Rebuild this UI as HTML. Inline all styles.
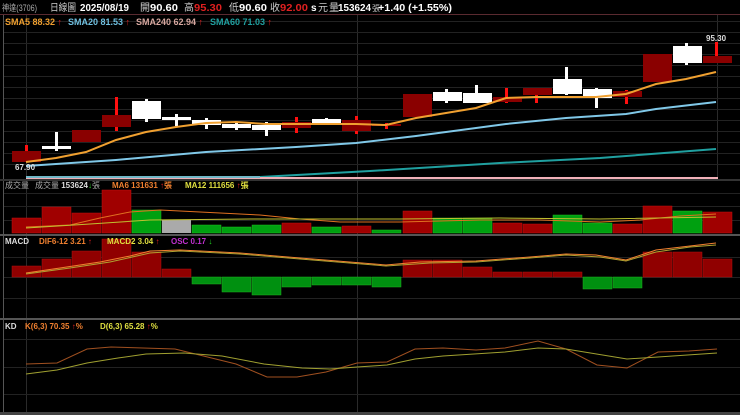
<!DOCTYPE html>
<html><head><meta charset="utf-8"><style>
html,body{margin:0;padding:0;background:#000;width:740px;height:415px;overflow:hidden}
svg{display:block}
text{font-family:"Liberation Sans","Noto Sans CJK TC",sans-serif}
</style></head><body>
<svg width="740" height="415" viewBox="0 0 740 415" xmlns="http://www.w3.org/2000/svg">
<rect width="740" height="415" fill="#000"/>
<!-- header -->
<g font-size="10">
<text x="2" y="11" font-size="9" fill="#aaa" textLength="35" lengthAdjust="spacingAndGlyphs">神達(3706)</text>
<text x="50" y="11" fill="#ccc" textLength="26" lengthAdjust="spacingAndGlyphs">日線圖</text>
<text x="80" y="11" font-weight="bold" fill="#fff" textLength="49" lengthAdjust="spacingAndGlyphs">2025/08/19</text>
<text x="140" y="11" fill="#ccc">開</text>
<text x="150" y="11" font-weight="bold" fill="#fff" textLength="28" lengthAdjust="spacingAndGlyphs">90.60</text>
<text x="184" y="11" fill="#ccc">高</text>
<text x="194" y="11" font-weight="bold" fill="#e02020" textLength="28" lengthAdjust="spacingAndGlyphs">95.30</text>
<text x="229" y="11" fill="#ccc">低</text>
<text x="239" y="11" font-weight="bold" fill="#fff" textLength="28" lengthAdjust="spacingAndGlyphs">90.60</text>
<text x="270" y="11" fill="#ccc">收</text>
<text x="280" y="11" font-weight="bold" fill="#e02020" textLength="28" lengthAdjust="spacingAndGlyphs">92.00</text>
<text x="311" y="11" font-weight="bold" fill="#fff">s</text>
<text x="318" y="11" fill="#ccc">元</text>
<text x="329" y="11" fill="#ccc">量</text>
<text x="338" y="11" font-weight="bold" fill="#fff" textLength="33" lengthAdjust="spacingAndGlyphs">153624</text>
<text x="372" y="11" fill="#ccc" font-size="8">張</text>
<text x="378" y="11" font-weight="bold" fill="#fff" textLength="74" lengthAdjust="spacingAndGlyphs">+1.40 (+1.55%)</text>
</g>
<line x1="0" y1="14.5" x2="740" y2="14.5" stroke="#5a2a30" stroke-width="1"/>
<!-- panel borders -->
<line x1="3.5" y1="15" x2="3.5" y2="415" stroke="#555"/>
<line x1="26.5" y1="15" x2="26.5" y2="415" stroke="#2a2a2a"/>
<line x1="357.5" y1="15" x2="357.5" y2="415" stroke="#2a2a2a"/>
<line x1="717.5" y1="15" x2="717.5" y2="178" stroke="#2a2a2a"/>
<!-- main grid -->
<g stroke="#222" stroke-width="1">
<line x1="4" y1="21.5" x2="740" y2="21.5"/><line x1="4" y1="32.5" x2="740" y2="32.5"/><line x1="4" y1="43.5" x2="740" y2="43.5"/><line x1="4" y1="54.5" x2="740" y2="54.5"/><line x1="4" y1="65.5" x2="740" y2="65.5"/><line x1="4" y1="76.5" x2="740" y2="76.5"/><line x1="4" y1="87.5" x2="740" y2="87.5"/><line x1="4" y1="98.5" x2="740" y2="98.5"/><line x1="4" y1="109.5" x2="740" y2="109.5"/><line x1="4" y1="120.5" x2="740" y2="120.5"/><line x1="4" y1="131.5" x2="740" y2="131.5"/><line x1="4" y1="142.5" x2="740" y2="142.5"/><line x1="4" y1="153.5" x2="740" y2="153.5"/><line x1="4" y1="164.5" x2="740" y2="164.5"/>
</g>
<!-- candle wicks -->
<g fill="#ff1010">
<rect x="25" y="145" width="3" height="6"/><rect x="115" y="97" width="3" height="34"/><rect x="295" y="117" width="3" height="16"/><rect x="355" y="116" width="3" height="18"/><rect x="385" y="123" width="3" height="6"/><rect x="505" y="88" width="3" height="15"/><rect x="535" y="95" width="3" height="8"/><rect x="625" y="90" width="3" height="14"/><rect x="715" y="42" width="3" height="21"/>
</g>
<g fill="#fff">
<rect x="55" y="132" width="3" height="19"/><rect x="145" y="99" width="3" height="23"/><rect x="175" y="114" width="3" height="12"/><rect x="205" y="118" width="3" height="11"/><rect x="235" y="122" width="3" height="8"/><rect x="265" y="122" width="3" height="14"/><rect x="325" y="118" width="3" height="7"/><rect x="445" y="89" width="3" height="14"/><rect x="475" y="85" width="3" height="18"/><rect x="565" y="67" width="3" height="28"/><rect x="595" y="88" width="3" height="20"/><rect x="685" y="43" width="3" height="22"/>
</g>
<g fill="#8a0000">
<rect x="12" y="151" width="29" height="11"/><rect x="72" y="130" width="29" height="12"/><rect x="102" y="115" width="29" height="12"/><rect x="282" y="122" width="29" height="6"/><rect x="342" y="120" width="29" height="11"/><rect x="372" y="124" width="29" height="2"/><rect x="403" y="94" width="29" height="23"/><rect x="493" y="97" width="29" height="5"/><rect x="523" y="88" width="29" height="7"/><rect x="613" y="91" width="29" height="6"/><rect x="643" y="54" width="29" height="28"/><rect x="703" y="56" width="29" height="7"/>
</g>
<g fill="#fff">
<rect x="42" y="146" width="29" height="3"/><rect x="132" y="101" width="29" height="18"/><rect x="162" y="117" width="29" height="3"/><rect x="192" y="120" width="29" height="5"/><rect x="222" y="124" width="29" height="4"/><rect x="252" y="125" width="29" height="5"/><rect x="312" y="119" width="29" height="5"/><rect x="433" y="92" width="29" height="9"/><rect x="463" y="93" width="29" height="10"/><rect x="553" y="79" width="29" height="15"/><rect x="583" y="89" width="29" height="9"/><rect x="673" y="46" width="29" height="17"/>
</g>
<!-- MAs -->
<polyline fill="none" stroke="#f0a030" stroke-width="2" points="26,162 56,158 86,152 116,140 146,132 176,127 206,123 236,122 266,124 296,124 326,124 356,124 386,125 416,118 446,113 476,108 506,98 536,97 566,97 596,97 626,94 656,84 686,79 716,72"/>
<polyline fill="none" stroke="#80c8e8" stroke-width="2" points="26,166 116,160 206,152 296,147 356,143 416,136 506,124 566,118 626,114 656,109 716,102"/>
<polyline fill="none" stroke="#20a0a0" stroke-width="2" points="260,177 370,171 500,163 600,158 716,149"/>
<line x1="26" y1="178" x2="718" y2="178" stroke="#f0b0b8" stroke-width="2"/>
<line x1="26" y1="177" x2="260" y2="177" stroke="#70b8c8" stroke-width="2"/>
<text x="15" y="170" font-size="8" font-weight="bold" fill="#ddd">67.90</text>
<text x="706" y="41" font-size="8" font-weight="bold" fill="#ddd">95.30</text>
<!-- separator -->
<rect x="0" y="179" width="740" height="2" fill="#333"/>
<!-- volume -->
<g stroke="#222"><line x1="4" y1="193.5" x2="740" y2="193.5"/><line x1="4" y1="206.5" x2="740" y2="206.5"/><line x1="4" y1="220.5" x2="740" y2="220.5"/></g>
<g fill="#a00000" stroke="#c01010" stroke-width="0.5">
<rect x="12" y="218" width="29" height="15"/><rect x="42" y="207" width="29" height="26"/><rect x="72" y="213" width="29" height="20"/><rect x="102" y="190" width="29" height="43"/><rect x="282" y="223" width="29" height="10"/><rect x="342" y="226" width="29" height="7"/><rect x="403" y="211" width="29" height="22"/><rect x="493" y="223" width="29" height="10"/><rect x="523" y="224" width="29" height="9"/><rect x="613" y="224" width="29" height="9"/><rect x="643" y="206" width="29" height="27"/><rect x="703" y="212" width="29" height="21"/>
</g>
<g fill="#00a010" stroke="#20c020" stroke-width="0.5">
<rect x="132" y="210" width="29" height="23"/><rect x="192" y="225" width="29" height="8"/><rect x="222" y="227" width="29" height="6"/><rect x="252" y="225" width="29" height="8"/><rect x="312" y="227" width="29" height="6"/><rect x="372" y="230" width="29" height="3"/><rect x="433" y="218" width="29" height="15"/><rect x="463" y="218" width="29" height="15"/><rect x="553" y="215" width="29" height="18"/><rect x="583" y="223" width="29" height="10"/><rect x="673" y="211" width="29" height="22"/>
</g>
<rect x="162" y="220" width="29" height="13" fill="#aaa"/>
<polyline fill="none" stroke="#e07020" stroke-width="1" points="26,227 70,225 100,218 130,212 160,210 200,212 260,215 300,219 340,222 400,222 480,220 540,220 600,222 640,220 680,216 716,214"/>
<polyline fill="none" stroke="#c0c030" stroke-width="1" points="26,228 90,224 150,220 250,219 400,219 500,218 600,219 716,217"/>
<rect x="0" y="234" width="740" height="2" fill="#555"/>
<!-- MACD -->
<g stroke="#222"><line x1="4" y1="257.5" x2="740" y2="257.5"/><line x1="4" y1="277.5" x2="740" y2="277.5"/><line x1="4" y1="298.5" x2="740" y2="298.5"/></g>
<g fill="#900000" stroke="#b01010" stroke-width="0.5">
<rect x="12" y="266" width="29" height="11"/><rect x="42" y="259" width="29" height="18"/><rect x="72" y="251" width="29" height="26"/><rect x="102" y="239" width="29" height="38"/><rect x="132" y="252" width="29" height="25"/><rect x="162" y="269" width="29" height="8"/><rect x="403" y="260" width="29" height="17"/><rect x="433" y="260" width="29" height="17"/><rect x="463" y="267" width="29" height="10"/><rect x="493" y="272" width="29" height="5"/><rect x="523" y="272" width="29" height="5"/><rect x="553" y="272" width="29" height="5"/><rect x="643" y="252" width="29" height="25"/><rect x="673" y="252" width="29" height="25"/><rect x="703" y="259" width="29" height="18"/>
</g>
<g fill="#009010" stroke="#20b020" stroke-width="0.5">
<rect x="192" y="277" width="29" height="7"/><rect x="222" y="277" width="29" height="15"/><rect x="252" y="277" width="29" height="18"/><rect x="282" y="277" width="29" height="10"/><rect x="312" y="277" width="29" height="8"/><rect x="342" y="277" width="29" height="8"/><rect x="372" y="277" width="29" height="10"/><rect x="583" y="277" width="29" height="12"/><rect x="613" y="277" width="29" height="11"/>
</g>
<polyline fill="none" stroke="#f08030" stroke-width="1" points="26,273 60,268 100,262 130,256 150,251 180,250 240,253 300,258 386,265 420,262 476,261 530,257 566,254 596,255 626,260 656,250 690,246 716,243"/>
<polyline fill="none" stroke="#b0a030" stroke-width="1" points="26,274 70,268 110,262 150,253 180,251 240,254 300,259 386,266 430,263 476,262 530,258 566,255 600,257 626,261 656,252 690,247 716,245"/>
<rect x="0" y="318" width="740" height="2" fill="#555"/>
<!-- KD -->
<g stroke="#222"><line x1="4" y1="339.5" x2="740" y2="339.5"/><line x1="4" y1="367.5" x2="740" y2="367.5"/><line x1="4" y1="394.5" x2="740" y2="394.5"/></g>
<polyline fill="none" stroke="#a05020" stroke-width="1" points="26,364 57,363 87,349 111,347 175,349 236,364 267,377 297,377 326,372 357,363 387,362 415,349 443,348 476,350 505,348 538,341 566,349 597,365 627,368 658,352 689,351 717,349"/>
<polyline fill="none" stroke="#a0a030" stroke-width="1" points="26,374 57,370 87,363 118,358 146,354 184,353 222,356 264,364 302,368 330,369 357,367 387,365 415,359 443,356 505,352 538,348 566,349 627,359 658,357 717,353"/>
<rect x="0" y="412" width="740" height="3" fill="#444"/>
<!-- labels on top -->
<text x="5" y="25" font-size="9" font-weight="bold" fill="#f0a030">SMA5 88.32 <tspan fill="#e02020">↑</tspan></text>
<text x="68" y="25" font-size="9" font-weight="bold" fill="#70c0e0">SMA20 81.53 <tspan fill="#e02020">↑</tspan></text>
<text x="136" y="25" font-size="9" font-weight="bold" fill="#d8a8a0">SMA240 62.94 <tspan fill="#e02020">↑</tspan></text>
<text x="210" y="25" font-size="9" font-weight="bold" fill="#20a0a0">SMA60 71.03 <tspan fill="#e02020">↑</tspan></text>
<text x="5" y="188" font-size="8" fill="#aaa">成交量</text>
<text x="35" y="188" font-size="8" fill="#aaa">成交量 <tspan font-weight="bold" fill="#ddd">153624</tspan><tspan fill="#20d020">↓</tspan>張</text>
<text x="112" y="188" font-size="8" font-weight="bold" fill="#f08030">MA6 131631 <tspan fill="#e02020">↑</tspan>張</text>
<text x="185" y="188" font-size="8" font-weight="bold" fill="#e0e040">MA12 111656 <tspan fill="#e02020">↑</tspan>張</text>
<text x="5" y="244" font-size="8" font-weight="bold" fill="#ddd">MACD</text>
<text x="39" y="244" font-size="8" font-weight="bold" fill="#f08030">DIF6-12 3.21 <tspan fill="#e02020">↑</tspan></text>
<text x="107" y="244" font-size="8" font-weight="bold" fill="#e0e040">MACD2 3.04 <tspan fill="#e02020">↑</tspan></text>
<text x="171" y="244" font-size="8" font-weight="bold" fill="#c030d0">OSC 0.17 <tspan fill="#20d020">↓</tspan></text>
<text x="5" y="329" font-size="8" font-weight="bold" fill="#ddd">KD</text>
<text x="25" y="329" font-size="8" font-weight="bold" fill="#f08030">K(6,3) 70.35 <tspan fill="#e02020">↑</tspan>%</text>
<text x="100" y="329" font-size="8" font-weight="bold" fill="#e0e040">D(6,3) 65.28 <tspan fill="#e02020">↑</tspan>%</text>
</svg>
</body></html>
